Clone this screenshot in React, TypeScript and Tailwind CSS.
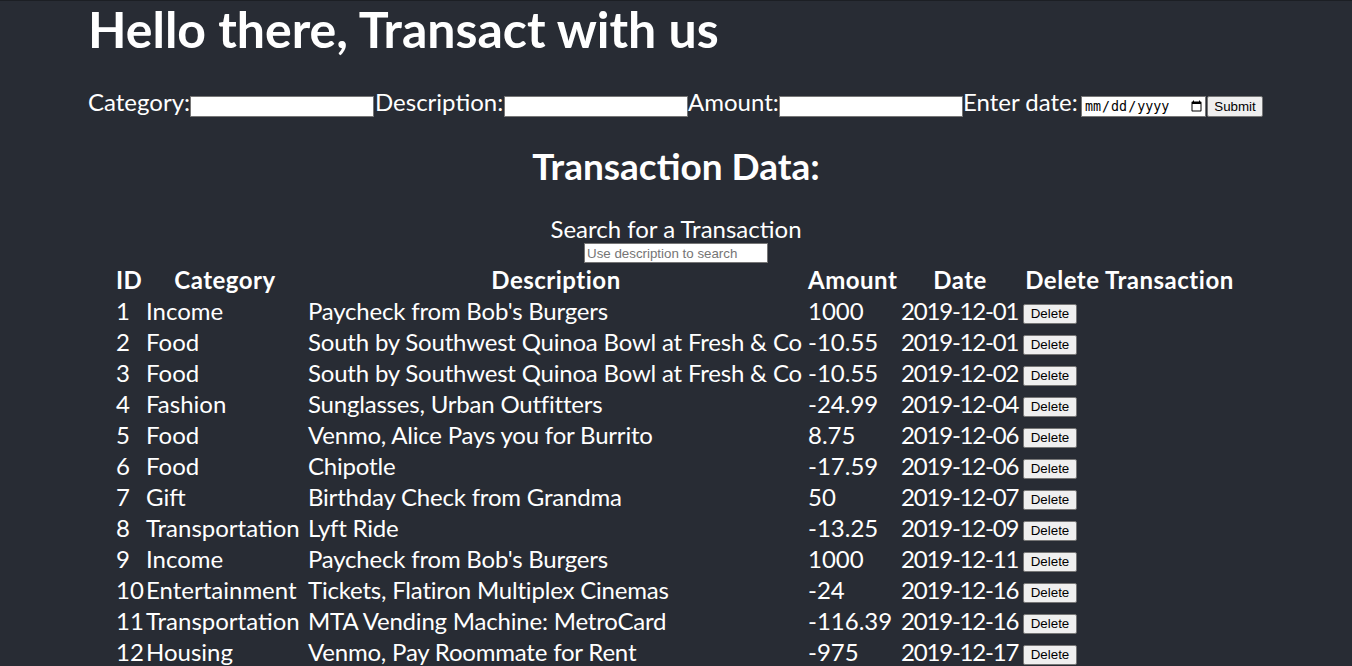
const transactions = [
  { id: 1, category: "Income", description: "Paycheck from Bob's Burgers", amount: "1000", date: "2019-12-01" },
  { id: 2, category: "Food", description: "South by Southwest Quinoa Bowl at Fresh & Co", amount: "-10.55", date: "2019-12-01" },
  { id: 3, category: "Food", description: "South by Southwest Quinoa Bowl at Fresh & Co", amount: "-10.55", date: "2019-12-02" },
  { id: 4, category: "Fashion", description: "Sunglasses, Urban Outfitters", amount: "-24.99", date: "2019-12-04" },
  { id: 5, category: "Food", description: "Venmo, Alice Pays you for Burrito", amount: "8.75", date: "2019-12-06" },
  { id: 6, category: "Food", description: "Chipotle", amount: "-17.59", date: "2019-12-06" },
  { id: 7, category: "Gift", description: "Birthday Check from Grandma", amount: "50", date: "2019-12-07" },
  { id: 8, category: "Transportation", description: "Lyft Ride", amount: "-13.25", date: "2019-12-09" },
  { id: 9, category: "Income", description: "Paycheck from Bob's Burgers", amount: "1000", date: "2019-12-11" },
  { id: 10, category: "Entertainment", description: "Tickets, Flatiron Multiplex Cinemas", amount: "-24", date: "2019-12-16" },
  { id: 11, category: "Transportation", description: "MTA Vending Machine: MetroCard", amount: "-116.39", date: "2019-12-16" },
  { id: 12, category: "Housing", description: "Venmo, Pay Roommate for Rent", amount: "-975", date: "2019-12-17" },
];

const inputCls =
  "w-[184px] h-[21px] mt-[8px] bg-white border border-[#767676] px-[2px] text-[13.33px] text-black font-['Liberation_Sans',sans-serif]";

const btnCls =
  "inline-block bg-[#efefef] border border-[#767676] rounded-[2px] px-[6px] text-[13.33px] leading-[16px] text-black font-['Liberation_Sans',sans-serif]";

const thCls = "p-px leading-[27px] font-bold text-center tracking-[0.5px]";
const tdCls = "p-px leading-[27px] text-left";

const App = () => {
  return (
    <div className="min-h-screen bg-[#282c34] text-white border-t border-[#1c1f24] font-['Lato',sans-serif] text-[24px] overflow-hidden">
      <div className="w-[1176px] mx-auto">
        <h1 className="text-[50px] leading-[56px] font-bold">Hello there, Transact with us</h1>

        <form className="flex items-start mt-[31px] whitespace-nowrap" onSubmit={(e) => e.preventDefault()}>
          <label className="w-[102px] leading-[27px]">Category:</label>
          <input className={inputCls} />
          <label className="w-[129px] leading-[27px] ml-px">Description:</label>
          <input className={inputCls} />
          <label className="w-[91px] leading-[27px]">Amount:</label>
          <input className={inputCls} />
          <label className="w-[118px] leading-[27px]">Enter date:</label>
          <input
            type="date"
            className="w-[125px] h-[21px] mt-[8px] bg-white border border-[#767676] pl-[2px] text-[13.33px] text-black font-['DejaVu_Sans_Mono',monospace]"
          />
          <button type="submit" className={btnCls + " h-[21px] mt-[8px] ml-px w-[56px]"}>
            Submit
          </button>
        </form>

        <h2 className="text-[37px] leading-[40px] font-bold text-center mt-[29px]">Transaction Data:</h2>

        <div className="flex flex-col items-center mt-[29px]">
          <p className="leading-[27px]">Search for a Transaction</p>
          <input
            placeholder="Use description to search"
            className="w-[184px] h-[20px] mt-px bg-white border border-[#767676] px-[2px] text-[13.33px] text-black placeholder:text-[#757575] font-['Liberation_Sans',sans-serif]"
          />
        </div>

        <table className="mx-auto table-fixed w-[1126px] border-separate border-spacing-[2px] whitespace-nowrap">
          <colgroup>
            <col className="w-[28px]" />
            <col className="w-[160px]" />
            <col className="w-[498px]" />
            <col className="w-[91px]" />
            <col className="w-[120px]" />
            <col className="w-[215px]" />
          </colgroup>
          <thead>
            <tr>
              <th className={thCls}>ID</th>
              <th className={thCls}>Category</th>
              <th className={thCls}>Description</th>
              <th className={thCls}>Amount</th>
              <th className={thCls}>Date</th>
              <th className={thCls}>Delete Transaction</th>
            </tr>
          </thead>
          <tbody>
            {transactions.map((t) => (
              <tr key={t.id}>
                <td className={tdCls}>{t.id}</td>
                <td className={tdCls}>{t.category}</td>
                <td className={tdCls + " tracking-[-0.2px]"}>{t.description}</td>
                <td className={tdCls}>{t.amount}</td>
                <td className={tdCls + " tracking-[-1.2px]"}>{t.date}</td>
                <td className={tdCls}>
                  <button className={btnCls + " w-[54px] h-[20px] align-[2px]"}>Delete</button>
                </td>
              </tr>
            ))}
          </tbody>
        </table>
      </div>
    </div>
  );
};

export default App;
